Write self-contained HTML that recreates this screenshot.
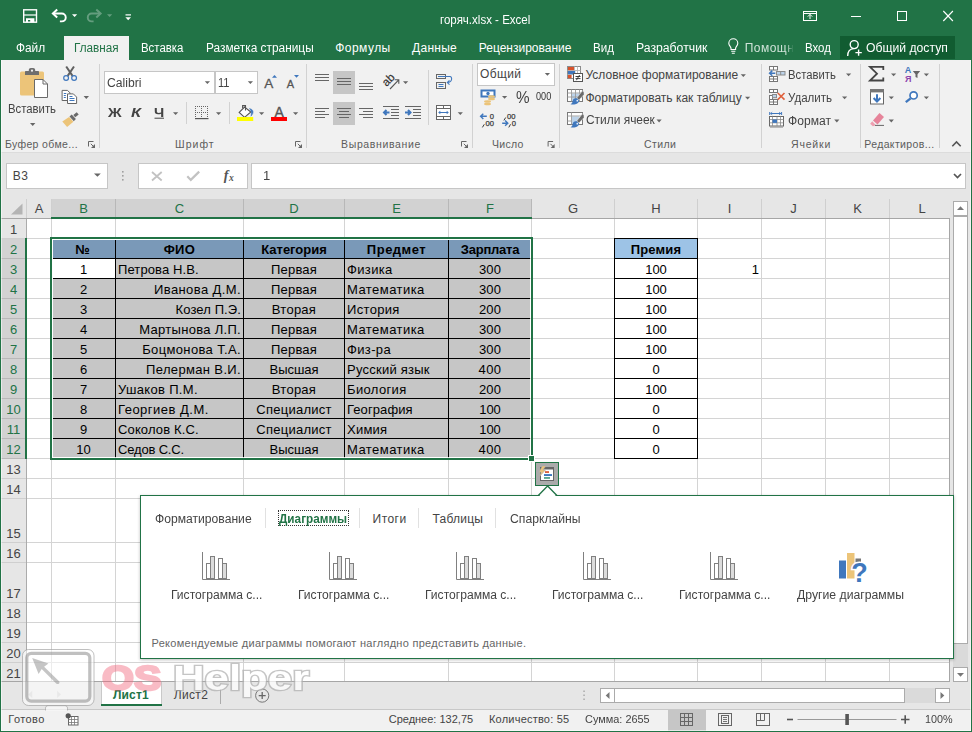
<!DOCTYPE html>
<html lang="ru">
<head>
<meta charset="utf-8">
<title>горяч.xlsx - Excel</title>
<style>
html,body{margin:0;padding:0}
body{width:972px;height:732px;overflow:hidden;background:#217346;font-family:"Liberation Sans",sans-serif;font-size:12px;color:#444;position:relative}
.a,.t,svg.a{position:absolute}
.t{white-space:nowrap;line-height:20px;transform-origin:0 50%;color:#444}
.bx{position:absolute;box-sizing:border-box}
.sep{position:absolute;width:1px;background:#d2d2d2}
.dd{position:absolute;width:0;height:0;border:3px solid transparent;border-top:3px solid #666;border-bottom:0;border-left-width:2.7px;border-right-width:2.7px}
.gl{background:#d4d4d4}
.ch{top:199px;height:19px;line-height:19px;text-align:center;font-size:13px;color:#444}
.ch.sel{background:#d2d2d2;color:#217346}
.rh{left:1px;width:25px;text-align:center;font-size:13px;color:#444}
.rh span{position:absolute;bottom:0;left:0;right:0;line-height:17px}
.rh.sel{background:#d2d2d2;color:#217346}
.c{height:19px;line-height:21px;font-size:13px;color:#000;white-space:nowrap;overflow:hidden;box-sizing:border-box;padding:0 2px}
.c.l{text-align:left}.c.r{text-align:right}.c.m{text-align:center}.c.b{font-weight:bold}
</style>
</head>
<body>
<!-- ===== title bar / tabs ===== -->
<div class="a" style="left:64px;top:36px;width:65px;height:24px;background:#f1f1f1"></div>
<div class="a" style="left:840px;top:36px;width:115px;height:23px;background:#115c31"></div>
<!-- ===== ribbon ===== -->
<div class="a" style="left:1px;top:60px;width:970px;height:92px;background:#f1f1f1"></div>
<div class="a" style="left:1px;top:152px;width:970px;height:1px;background:#dcdcdc"></div>
<div class="a" style="left:1px;top:153px;width:970px;height:556px;background:#e6e6e6"></div>
<!-- group separators -->
<div class="sep" style="left:99px;top:64px;height:84px"></div>
<div class="sep" style="left:306px;top:64px;height:84px"></div>
<div class="sep" style="left:472px;top:64px;height:84px"></div>
<div class="sep" style="left:559px;top:64px;height:84px"></div>
<div class="sep" style="left:761px;top:64px;height:84px"></div>
<div class="sep" style="left:860px;top:64px;height:84px"></div>
<div class="sep" style="left:939px;top:64px;height:84px"></div>
<div class="sep" style="left:186px;top:102px;height:22px"></div>
<div class="sep" style="left:229px;top:102px;height:22px"></div>
<div class="sep" style="left:428px;top:70px;height:55px"></div>
<!-- combo boxes -->
<div class="bx" style="left:104px;top:71px;width:111px;height:23px;background:#fff;border:1px solid #c6c6c6"></div>
<div class="bx" style="left:215px;top:71px;width:43px;height:23px;background:#fff;border:1px solid #c6c6c6"></div>
<div class="bx" style="left:477px;top:63px;width:78px;height:23px;background:#fff;border:1px solid #c6c6c6"></div>
<!-- pressed buttons -->
<div class="a" style="left:333px;top:71px;width:22px;height:23px;background:#c6c6c6"></div>
<div class="a" style="left:333px;top:102px;width:22px;height:23px;background:#c6c6c6"></div>
<!-- ===== formula bar ===== -->
<div class="bx" style="left:6px;top:163px;width:102px;height:26px;background:#fff;border:1px solid #c6c6c6"></div>
<div class="bx" style="left:138px;top:163px;width:110px;height:26px;background:#fff;border:1px solid #c6c6c6"></div>
<div class="bx" style="left:251px;top:163px;width:715px;height:26px;background:#fff;border:1px solid #c6c6c6"></div>
<!-- ===== sheet ===== -->
<div class="a" style="left:27px;top:219px;width:922px;height:462px;background:#fff"></div>
<div class="a gl" style="left:51px;top:219px;width:1px;height:462px"></div>
<div class="a gl" style="left:115px;top:219px;width:1px;height:462px"></div>
<div class="a gl" style="left:243px;top:219px;width:1px;height:462px"></div>
<div class="a gl" style="left:344px;top:219px;width:1px;height:462px"></div>
<div class="a gl" style="left:448px;top:219px;width:1px;height:462px"></div>
<div class="a gl" style="left:531px;top:219px;width:1px;height:462px"></div>
<div class="a gl" style="left:614px;top:219px;width:1px;height:462px"></div>
<div class="a gl" style="left:697px;top:219px;width:1px;height:462px"></div>
<div class="a gl" style="left:761px;top:219px;width:1px;height:462px"></div>
<div class="a gl" style="left:825px;top:219px;width:1px;height:462px"></div>
<div class="a gl" style="left:889px;top:219px;width:1px;height:462px"></div>
<div class="a gl" style="left:27px;top:238px;width:922px;height:1px"></div>
<div class="a gl" style="left:27px;top:258px;width:922px;height:1px"></div>
<div class="a gl" style="left:27px;top:278px;width:922px;height:1px"></div>
<div class="a gl" style="left:27px;top:298px;width:922px;height:1px"></div>
<div class="a gl" style="left:27px;top:318px;width:922px;height:1px"></div>
<div class="a gl" style="left:27px;top:338px;width:922px;height:1px"></div>
<div class="a gl" style="left:27px;top:358px;width:922px;height:1px"></div>
<div class="a gl" style="left:27px;top:378px;width:922px;height:1px"></div>
<div class="a gl" style="left:27px;top:398px;width:922px;height:1px"></div>
<div class="a gl" style="left:27px;top:418px;width:922px;height:1px"></div>
<div class="a gl" style="left:27px;top:438px;width:922px;height:1px"></div>
<div class="a gl" style="left:27px;top:458px;width:922px;height:1px"></div>
<div class="a gl" style="left:27px;top:478px;width:922px;height:1px"></div>
<div class="a gl" style="left:27px;top:498px;width:922px;height:1px"></div>
<div class="a gl" style="left:27px;top:542px;width:922px;height:1px"></div>
<div class="a gl" style="left:27px;top:562px;width:922px;height:1px"></div>
<div class="a gl" style="left:27px;top:602px;width:922px;height:1px"></div>
<div class="a gl" style="left:27px;top:622px;width:922px;height:1px"></div>
<div class="a gl" style="left:27px;top:642px;width:922px;height:1px"></div>
<div class="a gl" style="left:27px;top:662px;width:922px;height:1px"></div>
<div class="a" style="left:949px;top:218px;width:1px;height:464px;background:#a6a6a6"></div>
<div class="a" style="left:1px;top:681px;width:949px;height:1px;background:#a6a6a6"></div>
<div class="a" style="left:1px;top:199px;width:949px;height:19px;background:#e6e6e6"></div>
<div class="a" style="left:1px;top:218px;width:949px;height:1px;background:#a6a6a6"></div>
<div class="a ch" style="left:27px;width:24px">A</div>
<div class="a" style="left:51px;top:199px;width:1px;height:19px;background:#cfcfcf"></div>
<div class="a ch sel" style="left:52px;width:63px">B</div>
<div class="a" style="left:115px;top:199px;width:1px;height:19px;background:#b8b8b8"></div>
<div class="a ch sel" style="left:116px;width:127px">C</div>
<div class="a" style="left:243px;top:199px;width:1px;height:19px;background:#b8b8b8"></div>
<div class="a ch sel" style="left:244px;width:100px">D</div>
<div class="a" style="left:344px;top:199px;width:1px;height:19px;background:#b8b8b8"></div>
<div class="a ch sel" style="left:345px;width:103px">E</div>
<div class="a" style="left:448px;top:199px;width:1px;height:19px;background:#b8b8b8"></div>
<div class="a ch sel" style="left:449px;width:82px">F</div>
<div class="a" style="left:531px;top:199px;width:1px;height:19px;background:#b8b8b8"></div>
<div class="a ch" style="left:532px;width:82px">G</div>
<div class="a" style="left:614px;top:199px;width:1px;height:19px;background:#cfcfcf"></div>
<div class="a ch" style="left:615px;width:82px">H</div>
<div class="a" style="left:697px;top:199px;width:1px;height:19px;background:#cfcfcf"></div>
<div class="a ch" style="left:698px;width:63px">I</div>
<div class="a" style="left:761px;top:199px;width:1px;height:19px;background:#cfcfcf"></div>
<div class="a ch" style="left:762px;width:63px">J</div>
<div class="a" style="left:825px;top:199px;width:1px;height:19px;background:#cfcfcf"></div>
<div class="a ch" style="left:826px;width:63px">K</div>
<div class="a" style="left:889px;top:199px;width:1px;height:19px;background:#cfcfcf"></div>
<div class="a ch" style="left:890px;width:59px;padding-left:5px;box-sizing:border-box">L</div>
<div class="a" style="left:26px;top:199px;width:1px;height:19px;background:#cfcfcf"></div>
<div class="a" style="left:51px;top:217px;width:481px;height:2px;background:#217346"></div>
<svg class="a" style="left:10px;top:203px" width="13" height="12"><path d="M12.5 0.5V11.5H1z" fill="#b4b4b4"/></svg>
<div class="a" style="left:1px;top:219px;width:25px;height:462px;background:#e6e6e6"></div>
<div class="a" style="left:26px;top:219px;width:1px;height:462px;background:#ababab"></div>
<div class="a rh" style="top:219px;height:19px"><span>1</span></div>
<div class="a" style="left:1px;top:238px;width:25px;height:1px;background:#cfcfcf"></div>
<div class="a rh sel" style="top:239px;height:19px"><span>2</span></div>
<div class="a" style="left:1px;top:258px;width:25px;height:1px;background:#b8b8b8"></div>
<div class="a rh sel" style="top:259px;height:19px"><span>3</span></div>
<div class="a" style="left:1px;top:278px;width:25px;height:1px;background:#b8b8b8"></div>
<div class="a rh sel" style="top:279px;height:19px"><span>4</span></div>
<div class="a" style="left:1px;top:298px;width:25px;height:1px;background:#b8b8b8"></div>
<div class="a rh sel" style="top:299px;height:19px"><span>5</span></div>
<div class="a" style="left:1px;top:318px;width:25px;height:1px;background:#b8b8b8"></div>
<div class="a rh sel" style="top:319px;height:19px"><span>6</span></div>
<div class="a" style="left:1px;top:338px;width:25px;height:1px;background:#b8b8b8"></div>
<div class="a rh sel" style="top:339px;height:19px"><span>7</span></div>
<div class="a" style="left:1px;top:358px;width:25px;height:1px;background:#b8b8b8"></div>
<div class="a rh sel" style="top:359px;height:19px"><span>8</span></div>
<div class="a" style="left:1px;top:378px;width:25px;height:1px;background:#b8b8b8"></div>
<div class="a rh sel" style="top:379px;height:19px"><span>9</span></div>
<div class="a" style="left:1px;top:398px;width:25px;height:1px;background:#b8b8b8"></div>
<div class="a rh sel" style="top:399px;height:19px"><span>10</span></div>
<div class="a" style="left:1px;top:418px;width:25px;height:1px;background:#b8b8b8"></div>
<div class="a rh sel" style="top:419px;height:19px"><span>11</span></div>
<div class="a" style="left:1px;top:438px;width:25px;height:1px;background:#b8b8b8"></div>
<div class="a rh sel" style="top:439px;height:19px"><span>12</span></div>
<div class="a" style="left:1px;top:458px;width:25px;height:1px;background:#b8b8b8"></div>
<div class="a rh" style="top:459px;height:19px"><span>13</span></div>
<div class="a" style="left:1px;top:478px;width:25px;height:1px;background:#cfcfcf"></div>
<div class="a rh" style="top:479px;height:19px"><span>14</span></div>
<div class="a" style="left:1px;top:498px;width:25px;height:1px;background:#cfcfcf"></div>
<div class="a rh" style="top:499px;height:43px"><span>15</span></div>
<div class="a" style="left:1px;top:542px;width:25px;height:1px;background:#cfcfcf"></div>
<div class="a rh" style="top:543px;height:19px"><span>16</span></div>
<div class="a" style="left:1px;top:562px;width:25px;height:1px;background:#cfcfcf"></div>
<div class="a rh" style="top:563px;height:39px"><span>17</span></div>
<div class="a" style="left:1px;top:602px;width:25px;height:1px;background:#cfcfcf"></div>
<div class="a rh" style="top:603px;height:19px"><span>18</span></div>
<div class="a" style="left:1px;top:622px;width:25px;height:1px;background:#cfcfcf"></div>
<div class="a rh" style="top:623px;height:19px"><span>19</span></div>
<div class="a" style="left:1px;top:642px;width:25px;height:1px;background:#cfcfcf"></div>
<div class="a rh" style="top:643px;height:19px"><span>20</span></div>
<div class="a" style="left:1px;top:662px;width:25px;height:1px;background:#cfcfcf"></div>
<div class="a rh" style="top:663px;height:19px"><span>21</span></div>
<div class="a" style="left:25px;top:238px;width:2px;height:221px;background:#217346"></div>
<div class="a" style="left:53px;top:240px;width:477px;height:18px;background:#7a99b8"></div>
<div class="a" style="left:53px;top:259px;width:477px;height:198px;background:#c6c6c6"></div>
<div class="a" style="left:53px;top:259px;width:62px;height:19px;background:#fff"></div>
<div class="a" style="left:115px;top:240px;width:1px;height:217px;background:#000"></div>
<div class="a" style="left:243px;top:240px;width:1px;height:217px;background:#000"></div>
<div class="a" style="left:344px;top:240px;width:1px;height:217px;background:#000"></div>
<div class="a" style="left:448px;top:240px;width:1px;height:217px;background:#000"></div>
<div class="a" style="left:53px;top:258px;width:477px;height:1px;background:#000"></div>
<div class="a" style="left:53px;top:278px;width:477px;height:1px;background:#000"></div>
<div class="a" style="left:53px;top:298px;width:477px;height:1px;background:#000"></div>
<div class="a" style="left:53px;top:318px;width:477px;height:1px;background:#000"></div>
<div class="a" style="left:53px;top:338px;width:477px;height:1px;background:#000"></div>
<div class="a" style="left:53px;top:358px;width:477px;height:1px;background:#000"></div>
<div class="a" style="left:53px;top:378px;width:477px;height:1px;background:#000"></div>
<div class="a" style="left:53px;top:398px;width:477px;height:1px;background:#000"></div>
<div class="a" style="left:53px;top:418px;width:477px;height:1px;background:#000"></div>
<div class="a" style="left:53px;top:438px;width:477px;height:1px;background:#000"></div>
<div class="a c m b" style="left:52px;top:239px;width:63px;letter-spacing:1.90px;">№</div>
<div class="a c m b" style="left:116px;top:239px;width:127px;letter-spacing:0.38px;">ФИО</div>
<div class="a c m b" style="left:244px;top:239px;width:100px;">Категория</div>
<div class="a c m b" style="left:345px;top:239px;width:103px;letter-spacing:0.50px;">Предмет</div>
<div class="a c m b" style="left:449px;top:239px;width:82px;letter-spacing:-0.21px;">Зарплата</div>
<div class="a c m" style="left:52px;top:259px;width:63px;">1</div>
<div class="a c l" style="left:116px;top:259px;width:127px;letter-spacing:0.11px;">Петрова Н.В.</div>
<div class="a c m" style="left:244px;top:259px;width:100px;letter-spacing:0.16px;">Первая</div>
<div class="a c l" style="left:345px;top:259px;width:103px;letter-spacing:0.35px;">Физика</div>
<div class="a c m" style="left:449px;top:259px;width:82px;letter-spacing:0.13px;">300</div>
<div class="a c m" style="left:52px;top:279px;width:63px;">2</div>
<div class="a c r" style="left:116px;top:279px;width:127px;letter-spacing:0.40px;">Иванова Д.М.</div>
<div class="a c m" style="left:244px;top:279px;width:100px;letter-spacing:0.16px;">Первая</div>
<div class="a c l" style="left:345px;top:279px;width:103px;letter-spacing:0.45px;">Математика</div>
<div class="a c m" style="left:449px;top:279px;width:82px;letter-spacing:0.13px;">300</div>
<div class="a c m" style="left:52px;top:299px;width:63px;">3</div>
<div class="a c r" style="left:116px;top:299px;width:127px;letter-spacing:0.11px;">Козел П.Э.</div>
<div class="a c m" style="left:244px;top:299px;width:100px;letter-spacing:0.25px;">Вторая</div>
<div class="a c l" style="left:345px;top:299px;width:103px;letter-spacing:0.33px;">История</div>
<div class="a c m" style="left:449px;top:299px;width:82px;letter-spacing:0.13px;">200</div>
<div class="a c m" style="left:52px;top:319px;width:63px;">4</div>
<div class="a c r" style="left:116px;top:319px;width:127px;letter-spacing:0.30px;">Мартынова Л.П.</div>
<div class="a c m" style="left:244px;top:319px;width:100px;letter-spacing:0.16px;">Первая</div>
<div class="a c l" style="left:345px;top:319px;width:103px;letter-spacing:0.45px;">Математика</div>
<div class="a c m" style="left:449px;top:319px;width:82px;letter-spacing:0.13px;">300</div>
<div class="a c m" style="left:52px;top:339px;width:63px;">5</div>
<div class="a c r" style="left:116px;top:339px;width:127px;letter-spacing:0.36px;">Боцмонова Т.А.</div>
<div class="a c m" style="left:244px;top:339px;width:100px;letter-spacing:0.16px;">Первая</div>
<div class="a c l" style="left:345px;top:339px;width:103px;letter-spacing:0.35px;">Физ-ра</div>
<div class="a c m" style="left:449px;top:339px;width:82px;letter-spacing:0.13px;">300</div>
<div class="a c m" style="left:52px;top:359px;width:63px;">6</div>
<div class="a c r" style="left:116px;top:359px;width:127px;letter-spacing:0.35px;">Пелерман В.И.</div>
<div class="a c m" style="left:244px;top:359px;width:100px;letter-spacing:-0.05px;">Высшая</div>
<div class="a c l" style="left:345px;top:359px;width:103px;letter-spacing:0.24px;">Русский язык</div>
<div class="a c m" style="left:449px;top:359px;width:82px;letter-spacing:0.37px;">400</div>
<div class="a c m" style="left:52px;top:379px;width:63px;">7</div>
<div class="a c l" style="left:116px;top:379px;width:127px;letter-spacing:0.32px;">Ушаков П.М.</div>
<div class="a c m" style="left:244px;top:379px;width:100px;letter-spacing:0.25px;">Вторая</div>
<div class="a c l" style="left:345px;top:379px;width:103px;letter-spacing:0.36px;">Биология</div>
<div class="a c m" style="left:449px;top:379px;width:82px;letter-spacing:0.13px;">200</div>
<div class="a c m" style="left:52px;top:399px;width:63px;">8</div>
<div class="a c l" style="left:116px;top:399px;width:127px;letter-spacing:0.49px;">Георгиев Д.М.</div>
<div class="a c m" style="left:244px;top:399px;width:100px;letter-spacing:0.25px;">Специалист</div>
<div class="a c l" style="left:345px;top:399px;width:103px;letter-spacing:0.10px;">География</div>
<div class="a c m" style="left:449px;top:399px;width:82px;letter-spacing:-0.03px;">100</div>
<div class="a c m" style="left:52px;top:419px;width:63px;">9</div>
<div class="a c l" style="left:116px;top:419px;width:127px;letter-spacing:0.14px;">Соколов К.С.</div>
<div class="a c m" style="left:244px;top:419px;width:100px;letter-spacing:0.25px;">Специалист</div>
<div class="a c l" style="left:345px;top:419px;width:103px;letter-spacing:0.23px;">Химия</div>
<div class="a c m" style="left:449px;top:419px;width:82px;letter-spacing:-0.03px;">100</div>
<div class="a c m" style="left:52px;top:439px;width:63px;">10</div>
<div class="a c l" style="left:116px;top:439px;width:127px;letter-spacing:-0.17px;">Седов С.С.</div>
<div class="a c m" style="left:244px;top:439px;width:100px;letter-spacing:-0.05px;">Высшая</div>
<div class="a c l" style="left:345px;top:439px;width:103px;letter-spacing:0.45px;">Математика</div>
<div class="a c m" style="left:449px;top:439px;width:82px;letter-spacing:0.37px;">400</div>
<div class="bx" style="left:50px;top:237px;width:483px;height:223px;border:2px solid #217346"></div>
<div class="bx" style="left:52px;top:239px;width:479px;height:219px;border:1px solid #fff;border-right:0;border-bottom:0"></div>
<div class="bx" style="left:528px;top:455px;width:7px;height:7px;background:#217346;border:1px solid #fff"></div>
<div class="a" style="left:615px;top:239px;width:82px;height:19px;background:#9dc3e6"></div>
<div class="bx" style="left:614px;top:238px;width:84px;height:221px;border:1px solid #000"></div>
<div class="a" style="left:614px;top:258px;width:84px;height:1px;background:#000"></div>
<div class="a" style="left:614px;top:278px;width:84px;height:1px;background:#000"></div>
<div class="a" style="left:614px;top:298px;width:84px;height:1px;background:#000"></div>
<div class="a" style="left:614px;top:318px;width:84px;height:1px;background:#000"></div>
<div class="a" style="left:614px;top:338px;width:84px;height:1px;background:#000"></div>
<div class="a" style="left:614px;top:358px;width:84px;height:1px;background:#000"></div>
<div class="a" style="left:614px;top:378px;width:84px;height:1px;background:#000"></div>
<div class="a" style="left:614px;top:398px;width:84px;height:1px;background:#000"></div>
<div class="a" style="left:614px;top:418px;width:84px;height:1px;background:#000"></div>
<div class="a" style="left:614px;top:438px;width:84px;height:1px;background:#000"></div>
<div class="a c m b" style="left:615px;top:239px;width:82px;letter-spacing:0.18px;">Премия</div>
<div class="a c m" style="left:615px;top:259px;width:82px;letter-spacing:-0.03px;">100</div>
<div class="a c m" style="left:615px;top:279px;width:82px;letter-spacing:-0.03px;">100</div>
<div class="a c m" style="left:615px;top:299px;width:82px;letter-spacing:-0.03px;">100</div>
<div class="a c m" style="left:615px;top:319px;width:82px;letter-spacing:-0.03px;">100</div>
<div class="a c m" style="left:615px;top:339px;width:82px;letter-spacing:-0.03px;">100</div>
<div class="a c m" style="left:615px;top:359px;width:82px;">0</div>
<div class="a c m" style="left:615px;top:379px;width:82px;letter-spacing:-0.03px;">100</div>
<div class="a c m" style="left:615px;top:399px;width:82px;">0</div>
<div class="a c m" style="left:615px;top:419px;width:82px;">0</div>
<div class="a c m" style="left:615px;top:439px;width:82px;">0</div>
<div class="a c r" style="left:698px;top:259px;width:63px;">1</div>
<!-- ===== scrollbars ===== -->
<div class="bx" style="left:953px;top:201px;width:15px;height:481px;background:#dadada"></div>
<div class="bx" style="left:953px;top:201px;width:15px;height:15px;background:#fff;border:1px solid #ababab"></div>
<div class="bx" style="left:953px;top:216px;width:15px;height:428px;background:#fff;border:1px solid #ababab"></div>
<div class="bx" style="left:953px;top:667px;width:15px;height:15px;background:#fff;border:1px solid #ababab"></div>
<div class="bx" style="left:600px;top:688px;width:350px;height:15px;background:#dadada"></div>
<div class="bx" style="left:600px;top:688px;width:15px;height:15px;background:#fff;border:1px solid #ababab"></div>
<div class="bx" style="left:614px;top:688px;width:291px;height:15px;background:#fff;border:1px solid #ababab"></div>
<div class="bx" style="left:935px;top:688px;width:15px;height:15px;background:#fff;border:1px solid #ababab"></div>
<!-- ===== sheet tabs ===== -->
<div class="bx" style="left:101px;top:682px;width:61px;height:22px;background:#fff;border-left:1px solid #c9c9c9;border-right:1px solid #c9c9c9"></div>
<div class="a" style="left:101px;top:704px;width:61px;height:2px;background:#217346"></div>
<div class="a" style="left:220px;top:689px;width:1px;height:15px;background:#ababab"></div>
<!-- ===== status bar ===== -->
<div class="a" style="left:1px;top:709px;width:970px;height:22px;background:#f1f1f1;border-top:1px solid #c8c8c8;box-sizing:border-box"></div>
<div class="a" style="left:668px;top:710px;width:38px;height:21px;background:#c6c6c6"></div>
<!-- ===== quick analysis popup ===== -->
<div class="bx" style="left:140px;top:495px;width:814px;height:164px;background:#fff;border:1px solid #217346;box-shadow:0 1px 3px rgba(0,0,0,.25)"></div>
<div class="sep" style="left:265px;top:508px;height:20px;background:#e1e1e1"></div>
<div class="sep" style="left:359px;top:508px;height:20px;background:#e1e1e1"></div>
<div class="sep" style="left:418px;top:508px;height:20px;background:#e1e1e1"></div>
<div class="sep" style="left:495px;top:508px;height:20px;background:#e1e1e1"></div>
<div class="bx" style="left:278px;top:510px;width:71px;height:16px;border:1px dotted #333"></div>
<div class="bx" style="left:535px;top:462px;width:24px;height:24px;background:#ababab;border:1px solid #217346"></div>
<div class="a" style="left:1px;top:60px;width:1px;height:671px;background:rgba(255,255,255,.5)"></div>
<div class="a" style="left:970px;top:60px;width:1px;height:671px;background:rgba(255,255,255,.5)"></div>
<div class="a" style="left:1px;top:730px;width:970px;height:1px;background:rgba(255,255,255,.6)"></div>
<svg class="a" style="left:0;top:0" width="972" height="732" viewBox="0 0 972 732" fill="none">
<rect x="23.700" y="9.800" width="12.800" height="12.400" stroke="#fff" stroke-width="1.400"/><path d="M24 15h12" stroke="#fff" stroke-width="1.200"/><path d="M26 18.200h8.400v4h-4.200v-2.300h-2.200v2.300h-2z" fill="#fff"/>
<path d="M57.200 9.600l-4.300 3.900 4.300 3.900" stroke="#fff" stroke-width="2" fill="none"/>
<path d="M53.500 13.500h8.300a3.950 3.950 0 0 1 0 7.900h-1.900" stroke="#fff" stroke-width="1.900" fill="none"/>
<path d="M72 14.3h5.2l-2.6 2.6z" fill="#fff"/>
<g opacity=".3"><path d="M96.300 9.600l4.300 3.900-4.300 3.900" stroke="#fff" stroke-width="2" fill="none"/>
<path d="M100 13.500h-8.300a3.950 3.950 0 0 0 0 7.900h1.900" stroke="#fff" stroke-width="1.900" fill="none"/>
<path d="M107 14.3h5.2l-2.6 2.6z" fill="#fff"/>
</g>
<rect x="125.5" y="14.3" width="5.5" height="1.2" fill="#fff"/>
<path d="M125.4 17.3h5.6l-2.8 3z" fill="#fff"/>
<g stroke="#fff" stroke-width="1" fill="none">
<rect x="803.5" y="11.5" width="13" height="9"/><path d="M803.5 13.5h13"/><path d="M810 19v-4.5M807.8 16.6l2.2-2.2 2.2 2.2"/>
<path d="M851 16.5h10"/>
<rect x="897.5" y="11.5" width="9" height="9"/>
<path d="M943.3 11l9.6 10M952.9 11l-9.6 10" stroke-width="1.1"/>
</g>
<g stroke="#fff" stroke-width="1.1" fill="none">
<path d="M731 49.5v-1.2c0-1.6-2.2-2.4-2.2-5a4.5 4.5 0 0 1 9 0c0 2.6-2.2 3.4-2.2 5v1.2z"/><path d="M731.2 51.3h4.2M731.8 53.2h3"/>
<circle cx="854.200" cy="44.600" r="4" stroke-width="1.400"/><path d="M847.700 56c0-4.400 2.300-7.200 6-7.400" stroke-width="1.400"/><path d="M858.600 49.400v6.400M855.400 52.600h6.400" stroke-width="1.400"/>
</g>
<rect x="20" y="71.5" width="24" height="24" rx="1.5" fill="#ecc479"/>
<path d="M25 74.900v-2.800c0-.6.400-1 1-1h2.800v-1c0-1.200.900-2 2-2h2.400c1.100 0 2 .8 2 2v1h2.800c.6 0 1 .4 1 1v2.800z" fill="#6e6e6e"/><circle cx="32" cy="70.700" r="1.100" fill="#f1f1f1"/>
<path d="M34.500 79.500h8.500l4.500 4.500v13.500h-13z" fill="#fff" stroke="#6a6a6a" stroke-width="1"/><path d="M43 79.500v4.500h4.500" stroke="#6a6a6a" stroke-width="1"/>
<path d="M30 123h5.4l-2.7 3z" fill="#666"/>
<path d="M66.200 66.500l6.500 9.600M74 66.500l-6.500 9.600" stroke="#606060" stroke-width="2"/>
<circle cx="66.100" cy="78" r="2.400" stroke="#3f77bd" stroke-width="1.200" fill="#f1f1f1"/><circle cx="74.100" cy="78" r="2.400" stroke="#3f77bd" stroke-width="1.200" fill="#f1f1f1"/>
<path d="M62.100 90.400h5.400l2.500 2.500v7.600h-7.900z" fill="#fff" stroke="#666" stroke-width="1"/>
<path d="M67.500 93.900h5.900l3.200 3.200v6.400h-9.100z" fill="#fff" stroke="#666" stroke-width="1"/>
<path d="M63.800 93.500h2.500M63.800 95.500h2M63.800 97.500h2M69.500 98.500h5M69.500 100.500h5M69.500 96.500h3" stroke="#3f77bd" stroke-width="1"/>
<path d="M83.6 96h5.4l-2.7 3z" fill="#666"/>
<path d="M62.300 121.500l6.800-4.500 4.300 4.800-6.300 5.200z" fill="#ecc479"/>
<path d="M69.500 116.500l2.200-2 4.200 4.600-2.100 2.100z" fill="#6a6a6a"/><path d="M73.300 115l3.400-2.800 2 2.200-3.500 2.900z" fill="#6a6a6a"/>
<path d="M88.5 146.5v-5h5" stroke="#666" stroke-width="1"/><path d="M90.8 143.8l3 3" stroke="#666" stroke-width="1"/><path d="M95 144v4h-4z" fill="#666"/>
<path d="M295.5 146.5v-5h5" stroke="#666" stroke-width="1"/><path d="M297.8 143.8l3 3" stroke="#666" stroke-width="1"/><path d="M302 144v4h-4z" fill="#666"/>
<path d="M461.5 146.5v-5h5" stroke="#666" stroke-width="1"/><path d="M463.8 143.8l3 3" stroke="#666" stroke-width="1"/><path d="M468 144v4h-4z" fill="#666"/>
<path d="M548.1 146.5v-5h5" stroke="#666" stroke-width="1"/><path d="M550.4 143.8l3 3" stroke="#666" stroke-width="1"/><path d="M554.6 144v4h-4z" fill="#666"/>
<path d="M204.8 81.2h5.2l-2.6 2.8z" fill="#666"/>
<path d="M247.8 81.2h5.2l-2.6 2.8z" fill="#666"/>
<text x="264.200" y="88" font-family="Liberation Sans, sans-serif" font-size="13.500" fill="#555" stroke="#555" stroke-width=".3">A</text>
<path d="M272 77.700l2.500-2.800 2.500 2.800z" fill="#3f77bd"/>
<text x="286.800" y="88" font-family="Liberation Sans, sans-serif" font-size="11" fill="#555" stroke="#555" stroke-width=".3">A</text>
<path d="M294 75l2.500 2.800 2.500-2.800z" fill="#3f77bd"/>
<rect x="154.5" y="117.7" width="9.5" height="1" fill="#444"/>
<path d="M173 112.3h5.2l-2.6 2.8z" fill="#666"/>
<g stroke="#666" stroke-width="1" stroke-dasharray="1 1"><path d="M195.500 106v13M201.500 106v13M207.500 106v13M195 106.500h13M195 112.500h13"/></g>
<rect x="195" y="118" width="13.5" height="1.2" fill="#555"/>
<path d="M216 112.3h5.2l-2.6 2.8z" fill="#666"/>
<path d="M239.200 112.400l5.400-5.300 6.200 4.900-6.200 5.300z" fill="#fff" stroke="#555" stroke-width="1.100"/><path d="M245.500 110.600v-5h-2.900v2.700" stroke="#555" stroke-width="1.100"/><path d="M249.500 108.500c3.600.7 5.200 4 1.400 7.700.9-3 .5-5.400-1.400-7.700z" fill="#3f77bd" stroke="#3f77bd" stroke-width=".5"/>
<rect x="237" y="117" width="16.200" height="4" fill="#ffff00"/>
<path d="M259 112.3h5.2l-2.6 2.8z" fill="#666"/>
<text x="274.400" y="116.800" font-family="Liberation Sans, sans-serif" font-size="14" fill="#555" stroke="#555" stroke-width=".35">A</text>
<rect x="271" y="117" width="16" height="4" fill="#ff0000"/>
<path d="M293 112.3h5.2l-2.6 2.8z" fill="#666"/>
<rect x="315" y="74" width="14" height="1" fill="#666"/>
<rect x="315" y="77" width="14" height="1" fill="#666"/>
<rect x="315" y="80" width="14" height="1" fill="#666"/>
<rect x="337" y="78" width="14" height="1" fill="#666"/>
<rect x="337" y="81" width="14" height="1" fill="#666"/>
<rect x="337" y="84" width="14" height="1" fill="#666"/>
<rect x="359" y="83" width="14" height="1" fill="#666"/>
<rect x="359" y="86" width="14" height="1" fill="#666"/>
<rect x="359" y="89" width="14" height="1" fill="#666"/>
<rect x="315" y="108" width="14" height="1" fill="#666"/>
<rect x="337" y="108" width="14" height="1" fill="#666"/>
<rect x="359" y="108" width="14" height="1" fill="#666"/>
<rect x="315" y="111" width="10" height="1" fill="#666"/>
<rect x="339" y="111" width="10" height="1" fill="#666"/>
<rect x="363" y="111" width="10" height="1" fill="#666"/>
<rect x="315" y="114" width="14" height="1" fill="#666"/>
<rect x="337" y="114" width="14" height="1" fill="#666"/>
<rect x="359" y="114" width="14" height="1" fill="#666"/>
<rect x="315" y="117" width="10" height="1" fill="#666"/>
<rect x="339" y="117" width="10" height="1" fill="#666"/>
<rect x="363" y="117" width="10" height="1" fill="#666"/>
<text transform="translate(386.600 87) rotate(-45)" font-family="Liberation Sans, sans-serif" font-size="11.500" fill="#333" stroke="#333" stroke-width=".2">ab</text>
<path d="M390 89l8.500-8.800M394.800 79.800h4v4" stroke="#555" stroke-width="1.100"/>
<path d="M403 81.2h5.2l-2.6 2.8z" fill="#666"/>
<rect x="383" y="106" width="16" height="1" fill="#666"/>
<rect x="383" y="118" width="16" height="1" fill="#666"/>
<rect x="391" y="109" width="8" height="1" fill="#666"/>
<rect x="391" y="112" width="8" height="1" fill="#666"/>
<rect x="391" y="115" width="8" height="1" fill="#666"/>
<path d="M389.5 112.500h-5.500M386.5 110l-2.500 2.500 2.500 2.500" stroke="#3f77bd" stroke-width="2"/>
<rect x="405" y="106" width="16" height="1" fill="#666"/>
<rect x="405" y="118" width="16" height="1" fill="#666"/>
<rect x="413" y="109" width="8" height="1" fill="#666"/>
<rect x="413" y="112" width="8" height="1" fill="#666"/>
<rect x="413" y="115" width="8" height="1" fill="#666"/>
<path d="M405 112.500h5.500M408 110l2.500 2.500-2.500 2.500" stroke="#3f77bd" stroke-width="2"/>
<rect x="436.500" y="74.500" width="9" height="4" stroke="#666"/><rect x="436.500" y="82.500" width="9" height="6" stroke="#666"/>
<path d="M438 76.500h12M438.500 84.500h5M438.500 86.500h5" stroke="#3f77bd" stroke-width="1"/>
<path d="M450 76.500c2.500 0 2.500 6-2.500 6M449.500 80.500l-2.200 2.100 2.200 2.100" stroke="#3f77bd" stroke-width="1.100"/>
<rect x="436.500" y="105.500" width="14" height="14" stroke="#666" fill="#fff"/><path d="M436.500 108.500h14M436.500 116.500h14M443.500 105.500v3M443.500 116.500v3" stroke="#666"/>
<path d="M439 112.500h9" stroke="#3f77bd" stroke-width="1"/><path d="M440.300 110.700v3.600l-2.100-1.800zM446.700 110.700v3.600l2.100-1.800z" fill="#3f77bd"/>
<path d="M457.7 112.3h5.2l-2.6 2.8z" fill="#666"/>
<path d="M544.8 73h5.2l-2.6 2.8z" fill="#666"/>
<rect x="480.500" y="89.500" width="15" height="8" fill="#3f77bd"/><rect x="482.500" y="91.500" width="11" height="4" fill="#fff"/><circle cx="488" cy="93.500" r="1.700" fill="#3f77bd"/>
<g fill="#ecc479"><ellipse cx="491.500" cy="96.500" rx="3.500" ry="1.300"/><ellipse cx="491.500" cy="99" rx="3.500" ry="1.300"/><ellipse cx="487.500" cy="101.500" rx="3.500" ry="1.300"/><ellipse cx="487.500" cy="104" rx="3.500" ry="1.300"/></g>
<path d="M502 96h5.2l-2.6 2.8z" fill="#666"/>
<g font-family="Liberation Sans, sans-serif" font-size="7.600" fill="#3a3a3a" stroke="#3a3a3a" stroke-width=".25"><text x="489.700" y="118.700">0</text><text x="485.500" y="125.800">00</text><text x="507.100" y="118.700">00</text><text x="511.800" y="125.800">0</text></g>
<path d="M484.300 124.300l-1.900 3.100M505.700 117.500l-1.800 2.900M510.500 124.300l-1.700 3.100" stroke="#3a3a3a" stroke-width="1"/>
<path d="M486.800 116.300h-6M483.300 113.700l-2.700 2.600 2.700 2.600" stroke="#3f77bd" stroke-width="1.400"/>
<path d="M502.200 123.200h6M505.100 120.600l2.700 2.600-2.700 2.600" stroke="#3f77bd" stroke-width="1.400"/>
<rect x="567.500" y="66.500" width="13" height="12" fill="#fff" stroke="#8c8c8c"/><path d="M574.500 66.500v12M577.500 66.500v12M567.500 70.500h13M567.500 74.500h13" stroke="#b5b5b5" stroke-width=".9"/>
<rect x="568" y="67" width="6" height="3.200" fill="#d9532c"/><rect x="568" y="71" width="7.200" height="3.200" fill="#3f77bd"/><rect x="568" y="75" width="3.600" height="3.200" fill="#d9532c"/>
<rect x="573.500" y="73.500" width="9" height="8" fill="#fff" stroke="#555"/><path d="M575.500 76.500h5M575.500 78.600h5M579.600 75l-3.200 5.200" stroke="#333" stroke-width=".95"/>
<rect x="567.500" y="89.5" width="15" height="12" fill="#fff" stroke="#7a7a7a"/>
<rect x="571.500" y="93.5" width="7.500" height="7.500" fill="#bcd3ea"/>
<path d="M567.500 93.0h15M567.500 97.0h15M571.500 89.5v12M575.500 89.5v12M579.500 89.5v12" stroke="#9a9a9a" stroke-width=".9"/>
<path d="M582.400 90.8l1.600 1.500v2.200l-5 5.600-2.300-2.100z" fill="#6a6a6a" stroke="#f1f1f1" stroke-width=".5"/>
<path d="M576.800 98.3c-2.200-.6-4 .6-4.100 2.600-.1 1.500-1 2.600-2.200 3.300 3.600 1 8.300 0 8.700-3.600z" fill="#3f77bd"/><circle cx="577.300" cy="100.7" r=".9" fill="#e8f0f8"/>
<rect x="567.500" y="112.5" width="15" height="12" fill="#fff" stroke="#7a7a7a"/>
<rect x="571.500" y="116.5" width="7.500" height="7.500" fill="#bcd3ea"/>
<path d="M567.500 116.0h15M567.500 121.0h4M571.500 112.5v12" stroke="#9a9a9a" stroke-width=".9"/>
<path d="M582.400 113.8l1.600 1.500v2.200l-5 5.600-2.300-2.100z" fill="#6a6a6a" stroke="#f1f1f1" stroke-width=".5"/>
<path d="M576.800 121.3c-2.200-.6-4 .6-4.100 2.600-.1 1.500-1 2.600-2.200 3.300 3.600 1 8.300 0 8.700-3.600z" fill="#3f77bd"/><circle cx="577.300" cy="123.7" r=".9" fill="#e8f0f8"/>
<path d="M740.7 74.2h5.2l-2.6 2.8z" fill="#666"/>
<path d="M745 96.7h5.2l-2.6 2.8z" fill="#666"/>
<path d="M656.5 119.6h5.2l-2.6 2.8z" fill="#666"/>
<g stroke="#777" fill="#fff"><rect x="769.500" y="66.500" width="8" height="3.500"/><rect x="769.500" y="76.500" width="8" height="5"/></g><path d="M773.500 66.500v3.500M773.500 76.500v5M769.500 79h8" stroke="#777"/>
<rect x="776.500" y="71.500" width="8.500" height="3.500" fill="#bcd3ea" stroke="#8a8a8a"/><path d="M780.700 71.500v3.500" stroke="#8a8a8a"/>
<path d="M775.300 73.200h-5.500M772.300 70.600l-2.700 2.600 2.700 2.600" stroke="#3f77bd" stroke-width="1.500"/>
<g stroke="#777" fill="#fff"><rect x="769.500" y="89.500" width="8" height="3"/><rect x="769.500" y="99.500" width="8" height="5"/><rect x="769.500" y="95.500" width="3" height="4"/></g><path d="M773.500 89.500v3M773.500 99.500v5M769.500 102h8" stroke="#777"/>
<rect x="772.500" y="94.500" width="4" height="3.200" fill="#bcd3ea" stroke="#8a8a8a"/>
<path d="M777.800 93l6.700 6.600M784.500 93l-6.700 6.600" stroke="#e0603c" stroke-width="1.600"/>
<path d="M769.700 112v3M781.600 112v3M770.500 113.500h10.500" stroke="#3f77bd" stroke-width="1"/><path d="M772.200 112.200l-1.500 1.300 1.500 1.300M779.200 112.200l1.500 1.300-1.500 1.300" stroke="#3f77bd" stroke-width=".9"/>
<rect x="769.500" y="116.500" width="14" height="9.500" fill="#fff" stroke="#666"/><path d="M769.500 119.500h14M769.500 122.800h14M772.500 116.500v9.500M777 116.500v9.500M780.500 116.500v9.500" stroke="#8a8a8a" stroke-width=".8"/><rect x="772.500" y="119.500" width="4.500" height="3.400" fill="#3f77bd"/><path d="M770 127.200h13" stroke="#8a8a8a" stroke-width=".8"/>
<path d="M846 73.5h5.2l-2.6 2.8z" fill="#666"/>
<path d="M842 96.5h5.2l-2.6 2.8z" fill="#666"/>
<path d="M834.2 119.6h5.2l-2.6 2.8z" fill="#666"/>
<path d="M883.300 70v-3.100h-13.300l7 6.800-7 6.800h13.300v-3.100" stroke="#444" stroke-width="1.800" stroke-linejoin="miter"/>
<path d="M891 73.5h5.2l-2.6 2.8z" fill="#666"/>
<g font-family="Liberation Sans, sans-serif" font-weight="bold" font-size="9"><text x="904.700" y="72.600" fill="#3f77bd">А</text><text x="905" y="82" fill="#8e44ad">Я</text></g>
<path d="M912.800 71h7.400l-2.700 3.300v3.600l-2-.9v-2.700z" fill="#666"/>
<path d="M923.8 73.5h5.2l-2.6 2.8z" fill="#666"/>
<rect x="870.500" y="89.500" width="13" height="14.500" fill="#fff" stroke="#666"/><rect x="870" y="89" width="14" height="3.400" fill="#777"/><path d="M877 94.300v7M873.600 98l3.400 3.500 3.400-3.500" stroke="#3f77bd" stroke-width="2"/>
<path d="M888.7 96.5h5.2l-2.6 2.8z" fill="#666"/>
<circle cx="913.600" cy="95.400" r="3.600" stroke="#3f77bd" stroke-width="1.700" fill="#fff"/><path d="M910.600 98.400l-4.800 3.800" stroke="#3f77bd" stroke-width="2.300"/>
<path d="M923.8 96.5h5.2l-2.6 2.8z" fill="#666"/>
<path d="M873 120.500l6.500-7.500 4.500 4-6.500 7.500z" fill="#e6849a"/><path d="M872.300 121.300l-2.200 2.400 2.800 2.600 2.900-1.100z" fill="#ee9fb0"/><path d="M875 125.400h9" stroke="#666"/>
<path d="M888.7 119.6h5.2l-2.6 2.8z" fill="#666"/>
<path d="M952.300 146.200l4.200-4.200 4.200 4.200" stroke="#555" stroke-width="1.600"/>
<path d="M94 173.4h6.8l-3.4 3.4z" fill="#666"/>
<g fill="#a0a0a0"><rect x="122" y="171" width="1.600" height="1.600"/><rect x="122" y="175" width="1.600" height="1.600"/><rect x="122" y="179" width="1.600" height="1.600"/></g>
<path d="M152 172l9.700 8.500M161.700 172l-9.700 8.500" stroke="#c2c2c2" stroke-width="1.800"/>
<path d="M187.300 176.300l3.500 3.600 8.400-8.300" stroke="#c2c2c2" stroke-width="2.200"/>
<text x="223.800" y="179.600" font-family="Liberation Serif, serif" font-style="italic" font-weight="bold" font-size="14" fill="#555">f</text><text x="229" y="180.800" font-family="Liberation Serif, serif" font-style="italic" font-weight="bold" font-size="9.500" fill="#555">x</text>
<path d="M954 174l3.500 3.500 3.500-3.500" stroke="#555" stroke-width="1.700"/>
<path d="M957 210l3.500-3.800 3.500 3.800z" fill="#777"/><path d="M957 673l3.500 3.800 3.500-3.800z" fill="#777"/>
<path d="M609.500 692l-3.800 3.500 3.800 3.500z" fill="#777"/><path d="M940.500 692l3.800 3.500-3.800 3.500z" fill="#777"/>
<g fill="#aaa"><rect x="583.300" y="690.500" width="1.500" height="1.500"/><rect x="583.300" y="694.500" width="1.500" height="1.500"/><rect x="583.300" y="698.500" width="1.500" height="1.500"/></g>
<path d="M32.200 690.700l-3.900 3.700 3.900 3.700z" fill="#cdcdcd"/><path d="M57.100 690.700l3.900 3.700-3.900 3.700z" fill="#cdcdcd"/>
<circle cx="262.200" cy="695.600" r="6.600" stroke="#777" stroke-width="1" fill="none"/><path d="M258.700 695.600h7M262.200 692.100v7" stroke="#666" stroke-width="1.300"/>
<rect x="68.500" y="716.500" width="9.500" height="8.500" fill="#fff" stroke="#666"/><path d="M68.500 719.500h9.500M71.500 716.500v8.500M74.500 716.500v8.500M68.500 722.500h9.500" stroke="#777" stroke-width=".8"/><circle cx="68.200" cy="715.800" r="2.600" fill="#555"/>
<g stroke="#666" fill="none"><rect x="680.500" y="713.500" width="12" height="12"/><path d="M684.500 713.500v12M688.500 713.500v12M680.500 717.500h12M680.500 721.500h12"/></g>
<g stroke="#666" fill="none"><rect x="718.500" y="713.500" width="13" height="12"/><rect x="721.500" y="715.500" width="7" height="8"/><path d="M723 717.500h4M723 719.500h4M723 721.500h4" stroke-width=".9"/></g>
<g stroke="#666" fill="none"><rect x="756.500" y="713.500" width="13" height="12"/><path d="M760.500 713.500v6.500M764.500 713.500v6.500M756.500 720.500h8v-7"/></g>
<path d="M787 719.500h6" stroke="#555" stroke-width="1.600"/><path d="M797.500 719.500h99" stroke="#999" stroke-width="1"/><rect x="845.300" y="714" width="3.600" height="11" fill="#555"/><path d="M901 719.500h8.500M905.200 715.300v8.500" stroke="#555" stroke-width="1.600"/>
<path d="M538.800 496.500l8.800-9.500 8.800 9.500z" fill="#fff"/><path d="M538.300 495.500l9.300-9.500 9.300 9.500" stroke="#217346" stroke-width="1.300"/>
<rect x="540.500" y="467.500" width="13" height="13" fill="#fff" stroke="#666"/><rect x="540" y="467" width="14" height="2.500" fill="#666"/>
<rect x="545" y="471.200" width="4" height="1.700" fill="#d9532c"/><rect x="544" y="474.100" width="8" height="1.900" fill="#3f77bd"/><rect x="544" y="477.100" width="6" height="1.700" fill="#4a9d82"/>
<path d="M542.300 466l-3.300 6.200h2.400l-2.300 4.800 6.400-7h-2.600l3-4z" fill="#ecc479" stroke="#ababab" stroke-width=".5"/>
<g transform="translate(202 551)" stroke="#808080"><path d="M.5 1v27.500h27.500" fill="none"/><rect x="4.500" y="12.500" width="4" height="15" fill="#fff"/><rect x="8.500" y="5.500" width="4" height="22" fill="#dcdcdc"/><rect x="16.500" y="7.500" width="4" height="20" fill="#fff"/><rect x="20.500" y="12.500" width="4" height="15" fill="#dcdcdc"/></g>
<g transform="translate(329 551)" stroke="#808080"><path d="M.5 1v27.500h27.500" fill="none"/><rect x="4.500" y="12.500" width="4" height="15" fill="#fff"/><rect x="8.500" y="5.500" width="4" height="22" fill="#dcdcdc"/><rect x="16.500" y="7.500" width="4" height="20" fill="#fff"/><rect x="20.500" y="12.500" width="4" height="15" fill="#dcdcdc"/></g>
<g transform="translate(456 551)" stroke="#808080"><path d="M.5 1v27.500h27.500" fill="none"/><rect x="4.500" y="12.500" width="4" height="15" fill="#fff"/><rect x="8.500" y="5.500" width="4" height="22" fill="#dcdcdc"/><rect x="16.500" y="7.500" width="4" height="20" fill="#fff"/><rect x="20.500" y="12.500" width="4" height="15" fill="#dcdcdc"/></g>
<g transform="translate(583 551)" stroke="#808080"><path d="M.5 1v27.500h27.500" fill="none"/><rect x="4.500" y="12.500" width="4" height="15" fill="#fff"/><rect x="8.500" y="5.500" width="4" height="22" fill="#dcdcdc"/><rect x="16.500" y="7.500" width="4" height="20" fill="#fff"/><rect x="20.500" y="12.500" width="4" height="15" fill="#dcdcdc"/></g>
<g transform="translate(710 551)" stroke="#808080"><path d="M.5 1v27.500h27.500" fill="none"/><rect x="4.500" y="12.500" width="4" height="15" fill="#fff"/><rect x="8.500" y="5.500" width="4" height="22" fill="#dcdcdc"/><rect x="16.500" y="7.500" width="4" height="20" fill="#fff"/><rect x="20.500" y="12.500" width="4" height="15" fill="#dcdcdc"/></g>
<rect x="839" y="560.500" width="7" height="18" fill="#3f77bd"/><rect x="847" y="553" width="7.500" height="25.500" fill="#ecc479"/><rect x="855.500" y="558.500" width="5.500" height="4" fill="#777"/>
<text x="851.300" y="582.300" font-family="Liberation Sans, sans-serif" font-weight="bold" font-size="27" fill="#3f77bd" stroke="#fff" stroke-width="2.800" paint-order="stroke">?</text>
<g>
<rect x="22.500" y="649.500" width="71.500" height="56" rx="6" fill="rgba(255,255,255,.55)" stroke="rgba(150,150,150,.6)" stroke-width="1"/>
<rect x="26.800" y="653.300" width="63" height="47.800" rx="4.500" fill="none" stroke="rgba(140,140,140,.55)" stroke-width="3.200"/>
<path d="M45.500 710.500v-2.300c0-1.500 1-2.500 2.500-2.500h17c1.500 0 2.500 1 2.500 2.500v2.300" fill="rgba(255,255,255,.6)" stroke="rgba(150,150,150,.6)" stroke-width="1"/>
<g fill="rgba(140,140,140,.5)" stroke="none"><path d="M32.200 658l16.200 5.600-4.300 3.100 14.700 14.200c.9.900.9 2 .2 2.700s-1.900.7-2.800-.2l-14.500-14.300-3.100 4.900z"/></g>
</g>
</svg>
<span class="t" style="left:439.8px;top:10.0px;font-size:12px;color:#fff;transform:scaleX(0.960);">горяч.xlsx - Excel</span>
<span class="t" style="left:15.8px;top:37.5px;font-size:12px;color:#fff;transform:scaleX(0.987);">Файл</span>
<span class="t" style="left:73.8px;top:37.5px;font-size:12px;color:#217346;transform:scaleX(0.977);">Главная</span>
<span class="t" style="left:140.8px;top:37.5px;font-size:12px;color:#fff;transform:scaleX(0.951);">Вставка</span>
<span class="t" style="left:205.7px;top:37.5px;font-size:12px;color:#fff;transform:scaleX(0.989);">Разметка страницы</span>
<span class="t" style="left:335.3px;top:37.5px;font-size:12px;color:#fff;letter-spacing:0.45px;">Формулы</span>
<span class="t" style="left:412.1px;top:37.5px;font-size:12px;color:#fff;letter-spacing:0.26px;">Данные</span>
<span class="t" style="left:478.8px;top:37.5px;font-size:12px;color:#fff;">Рецензирование</span>
<span class="t" style="left:592.6px;top:37.5px;font-size:12px;color:#fff;transform:scaleX(0.964);">Вид</span>
<span class="t" style="left:635.6px;top:37.5px;font-size:12px;color:#fff;transform:scaleX(1.019);">Разработчик</span>
<span class="t" style="left:744.7px;top:37.5px;font-size:12px;color:#cfe3d8;letter-spacing:0.47px;-webkit-mask-image:linear-gradient(90deg,#000 84%,transparent 99%);mask-image:linear-gradient(90deg,#000 84%,transparent 99%);">Помощн</span>
<span class="t" style="left:804.8px;top:37.5px;font-size:12px;color:#fff;transform:scaleX(0.955);">Вход</span>
<span class="t" style="left:865.8px;top:37.5px;font-size:12px;color:#fff;transform:scaleX(1.015);">Общий доступ</span>
<span class="t" style="left:7.8px;top:98.7px;font-size:12px;transform:scaleX(0.944);">Вставить</span>
<span class="t" style="left:4.9px;top:133.6px;font-size:10.5px;color:#5c5c5c;letter-spacing:0.36px;">Буфер обме...</span>
<span class="t" style="left:107.1px;top:72.9px;font-size:12px;transform:scaleX(1.012);">Calibri</span>
<span class="t" style="left:218.2px;top:72.9px;font-size:12px;transform:scaleX(0.926);">11</span>
<span class="t" style="left:108.0px;top:102.6px;font-size:12px;font-weight:bold;transform:scaleX(1.256);">Ж</span>
<span class="t" style="left:131.3px;top:102.6px;font-size:12px;font-weight:bold;font-style:italic;transform:scaleX(1.358);">К</span>
<span class="t" style="left:154.0px;top:102.6px;font-size:12px;font-weight:bold;transform:scaleX(1.214);">Ч</span>
<span class="t" style="left:175.0px;top:133.6px;font-size:10.5px;color:#5c5c5c;letter-spacing:1.02px;">Шрифт</span>
<span class="t" style="left:341.1px;top:133.6px;font-size:10.5px;color:#5c5c5c;letter-spacing:0.63px;">Выравнивание</span>
<span class="t" style="left:480.1px;top:64.4px;font-size:12px;letter-spacing:0.33px;">Общий</span>
<span class="t" style="left:515.8px;top:86.9px;font-size:16.5px;transform:scaleX(0.926);">%</span>
<span class="t" style="left:536.3px;top:86.9px;font-size:10px;color:#333;transform:scaleX(0.911);">000</span>
<span class="t" style="left:492.0px;top:133.6px;font-size:10.5px;color:#5c5c5c;letter-spacing:0.31px;">Число</span>
<span class="t" style="left:585.5px;top:65.0px;font-size:12px;">Условное форматирование</span>
<span class="t" style="left:585.5px;top:87.5px;font-size:12px;">Форматировать как таблицу</span>
<span class="t" style="left:585.5px;top:110.4px;font-size:12px;transform:scaleX(0.994);">Стили ячеек</span>
<span class="t" style="left:644.0px;top:133.6px;font-size:10.5px;color:#5c5c5c;letter-spacing:0.38px;">Стили</span>
<span class="t" style="left:788.2px;top:64.9px;font-size:12px;transform:scaleX(0.940);">Вставить</span>
<span class="t" style="left:788.2px;top:87.7px;font-size:12px;transform:scaleX(0.963);">Удалить</span>
<span class="t" style="left:788.2px;top:110.6px;font-size:12px;transform:scaleX(1.007);">Формат</span>
<span class="t" style="left:791.0px;top:133.6px;font-size:10.5px;color:#5c5c5c;letter-spacing:0.81px;">Ячейки</span>
<span class="t" style="left:864.3px;top:133.6px;font-size:10.5px;color:#5c5c5c;letter-spacing:0.36px;">Редактиров...</span>
<span class="t" style="left:12.8px;top:166.3px;font-size:12px;letter-spacing:0.33px;">B3</span>
<span class="t" style="left:262.9px;top:166.3px;font-size:12px;transform:scaleX(1.083);">1</span>
<span class="t" style="left:154.9px;top:508.5px;font-size:12px;transform:scaleX(1.011);">Форматирование</span>
<span class="t" style="left:279.3px;top:508.5px;font-size:12px;color:#217346;font-weight:bold;transform:scaleX(0.979);">Диаграммы</span>
<span class="t" style="left:372.6px;top:508.5px;font-size:12px;letter-spacing:0.44px;">Итоги</span>
<span class="t" style="left:432.4px;top:508.5px;font-size:12px;letter-spacing:0.26px;">Таблицы</span>
<span class="t" style="left:509.6px;top:508.5px;font-size:12px;transform:scaleX(1.015);">Спарклайны</span>
<span class="t" style="left:170.7px;top:585.0px;font-size:12px;transform:scaleX(1.007);">Гистограмма с...</span>
<span class="t" style="left:297.7px;top:585.0px;font-size:12px;transform:scaleX(1.007);">Гистограмма с...</span>
<span class="t" style="left:424.7px;top:585.0px;font-size:12px;transform:scaleX(1.007);">Гистограмма с...</span>
<span class="t" style="left:551.7px;top:585.0px;font-size:12px;transform:scaleX(1.007);">Гистограмма с...</span>
<span class="t" style="left:678.7px;top:585.0px;font-size:12px;transform:scaleX(1.007);">Гистограмма с...</span>
<span class="t" style="left:797.4px;top:585.0px;font-size:12px;transform:scaleX(1.019);">Другие диаграммы</span>
<span class="t" style="left:151.6px;top:632.7px;font-size:11px;color:#666;letter-spacing:0.28px;">Рекомендуемые диаграммы помогают наглядно представить данные.</span>
<span class="t" style="left:112.9px;top:685.0px;font-size:12px;color:#217346;font-weight:bold;letter-spacing:0.18px;">Лист1</span>
<span class="t" style="left:173.8px;top:685.0px;font-size:12px;letter-spacing:0.32px;">Лист2</span>
<span class="t" style="left:8.3px;top:709.1px;font-size:11px;letter-spacing:0.41px;">Готово</span>
<span class="t" style="left:388.7px;top:709.3px;font-size:11px;">Среднее: 132,75</span>
<span class="t" style="left:489.0px;top:709.3px;font-size:11px;letter-spacing:0.21px;">Количество: 55</span>
<span class="t" style="left:584.7px;top:709.3px;font-size:11px;transform:scaleX(0.993);">Сумма: 2655</span>
<span class="t" style="left:924.9px;top:708.8px;font-size:11px;transform:scaleX(0.981);">100%</span>
<span class="t" style="left:101.7px;top:667.6px;font-size:35px;color:#f2667c;font-weight:bold;transform:scaleX(1.174);-webkit-text-stroke:2.4px #f2667c;opacity:.44;">OS</span>
<span class="t" style="left:173.1px;top:667.6px;font-size:35px;color:#fff;font-weight:bold;transform:scaleX(1.250);-webkit-text-stroke:2.6px #b0b0b0;paint-order:stroke fill;opacity:.72;">Helper</span>

</body>
</html>
